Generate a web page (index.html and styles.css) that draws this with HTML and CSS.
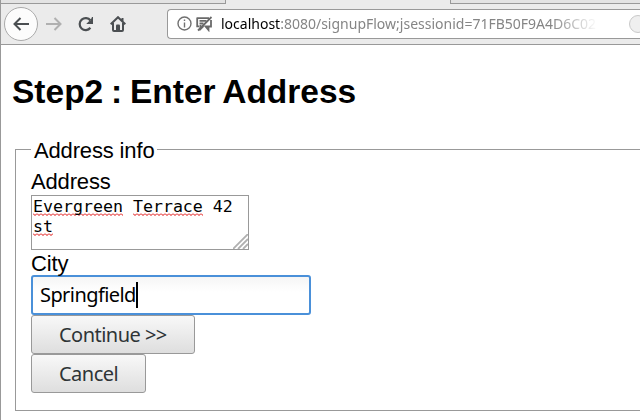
FILE: index.html
```html
<!DOCTYPE html>
<html lang="en">
<head>
<meta charset="utf-8">
<title>Step2 : Enter Address</title>
<link rel="stylesheet" href="styles.css">
</head>
<body>
<div class="window">
  <div class="tabs"><div class="tab left"></div><div class="tab active"></div><div class="tab right"></div></div>
  <div class="toolbar">
    <span class="back"><svg width="16" height="14" viewBox="0 0 16 14"><path d="M7.5 1 1.5 7l6 6M2 7h14"/></svg></span>
    <svg class="forward" width="16" height="14" viewBox="0 0 16 14"><path d="M8.500 1l6 6-6 6M0 7h14"/></svg>
    <svg class="reload" width="16" height="16" viewBox="0 0 16 16"><path d="M12.400 11.800A6 6 0 1 1 12.500 4.500"/><path class="fill" d="M15 1v7H8.200l2.500-2.500 1.700-1L14 1z"/></svg>
    <svg class="home" width="16" height="16" viewBox="0 0 16 16"><path d="M.7 8.300 8 1.200l7.300 7.100M3 7v7q0 1 1 1h8q1 0 1-1V7M12.500 2v3"/><path class="fill" d="M6 15V9.500q0-1 1-1h2q1 0 1 1V15z"/></svg>
    <div class="urlbar">
      <svg class="info" width="15" height="15" viewBox="0 0 15 15"><circle cx="7.500" cy="7.500" r="6.500"/><path d="M7.500 6.500V11.500M7.500 3.500v1.600"/></svg>
      <svg class="notify" width="17" height="16" viewBox="0 0 17 16"><path d="M1 2.200h12M1.200 1.500v8.800h2M3.500 4.800h7M3.500 7.500h4M15 4v6.500H9.500L12.500 14v-3.500M4.500 9v4l3-3"/><path d="M15.500 1 2 14.500"/></svg>
      <span class="url"><b>localhost</b>:8080/signupFlow;jsessionid=71FB50F9A4D6C02</span>
      <span class="pocket"></span>
    </div>
  </div>
  <main>
    <h1>Step2 : Enter Address</h1>
    <form class="group">
      <div class="legend"><i class="stub"></i><span>Address info</span><i class="rule"></i></div>
      <div class="fields">
        <div class="label">Address</div>
        <div class="textarea"><span class="misspelt">Evergreen</span> <span class="misspelt">Terrace</span> 42<br><span class="misspelt">st</span>
          <svg class="grip" width="15" height="15" viewBox="0 0 15 15"><path d="M0 15 15 0M5 15 15 5M10 15l5-5"/></svg>
        </div>
        <div class="label city">City</div>
        <div class="input"><span>Springfield</span><i class="caret"></i></div>
        <div class="button continue">Continue &gt;&gt;</div>
        <div class="button cancel">Cancel</div>
      </div>
    </form>
  </main>
</div>
</body>
</html>
```
FILE: styles.css
```css
* { box-sizing: border-box; }
body { margin: 0; width: 640px; height: 420px; overflow: hidden; background: #fff; color: #000; font-family: "Liberation Sans", sans-serif; }
svg { display: block; flex: none; fill: none; stroke: #4b4f52; stroke-width: 2; }
.window { height: 420px; border-left: 1px solid #999; }
.tabs { display: flex; height: 4px; background: #e9e9e9; }
.tab { border-bottom: 1px solid #999; background: #e3e3e3; }
.left { width: 225px; border-right: 1px solid #999; }
.active { width: 224px; border: 0; background: #ebebeb; }
.right { flex: 1; border-left: 1px solid #999; }
.toolbar { display: flex; align-items: center; height: 41px; padding: 0 0 1px 3px; background: #ebebeb; border-bottom: 1px solid #999; }
.back { width: 34px; height: 34px; flex: none; border: 1px solid #aaa; border-radius: 50%; background: #fcfcfc; display: flex; align-items: center; justify-content: center; }
.forward { margin-left: 8px; stroke: #b0b0b0; }
.reload { margin-left: 16px; stroke-width: 2.200; }
.home { margin-left: 16px; stroke-width: 2; }
.fill { fill: #4b4f52; stroke: none; }
.urlbar { position: relative; display: flex; align-items: center; flex: 1; height: 30px; margin-left: 41px; padding-left: 9px; border: 1px solid #999; border-right: 0; border-radius: 4px 0 0 4px; background: #fff; overflow: hidden; }
.info { stroke: #707070; stroke-width: 1.400; }
.notify { margin-left: 4px; stroke: #6a6a6a; stroke-width: 1.800; }
.url { margin-left: 8px; width: 380px; font: 14px/24px "Noto Sans", sans-serif; color: #858585; white-space: nowrap; -webkit-mask-image: linear-gradient(90deg, #000 330px, transparent 377px); mask-image: linear-gradient(90deg, #000 330px, transparent 377px); }
.url b { font-weight: 400; color: #000; }
.pocket { position: absolute; left: 461px; top: 5px; width: 18px; height: 18px; border: 1px solid #c8c8c8; border-radius: 50%; background: #efefef; }
main { padding-left: 12px; }
h1 { margin: 0 0 0 -1px; padding-top: 27px; height: 96px; font-size: 33.500px; line-height: 40px; word-spacing: -1.500px; white-space: nowrap; }
.group { margin-left: 2px; height: 270px; }
.legend { display: flex; height: 17px; font-size: 22px; line-height: 20px; letter-spacing: -.15px; }
.legend span { width: 126px; padding-left: 3px; white-space: nowrap; }
.stub, .rule { margin-top: 8px; border-top: 1px solid #999; }
.stub { width: 16px; border-left: 1px solid #999; }
.rule { flex: 1; }
.fields { height: 253px; padding: 11px 0 0 15px; border-left: 1px solid #999; border-bottom: 1px solid #999; }
.label { height: 26px; font-size: 22px; line-height: 26px; letter-spacing: -.15px; }
.textarea { position: relative; width: 218px; height: 55px; padding: 1px; border: 1px solid #999; font: 16.600px/20px "DejaVu Sans Mono", monospace; }
.misspelt { background: url("data:image/svg+xml,%3Csvg xmlns='http://www.w3.org/2000/svg' width='4' height='3'%3E%3Cpath d='M0 .5 2 2.500 4 .5' fill='none' stroke='%23d00'/%3E%3C/svg%3E") repeat-x left bottom; }
.grip { position: absolute; right: 0; bottom: 0; stroke: #b0b0b0; stroke-width: 1.800; }
.city { height: 25px; line-height: 28px; }
.input { display: flex; align-items: center; width: 280px; height: 40px; padding-left: 7px; border: 2px solid #4a90d9; border-radius: 3px; background: linear-gradient(#f5f5f5, #fff 15px); font: 20px/28px "Noto Sans", sans-serif; letter-spacing: -.58px; }
.caret { width: 2px; height: 26px; background: #000; }
.button { height: 39px; padding-left: 27px; border: 1px solid #999; border-radius: 3px; background: linear-gradient(#f8f8f8, #dedede); color: #2e3436; font: 20px/37px "Noto Sans", sans-serif; letter-spacing: -.53px; white-space: nowrap; }
.continue { width: 164px; }
.cancel { width: 115px; }
```
